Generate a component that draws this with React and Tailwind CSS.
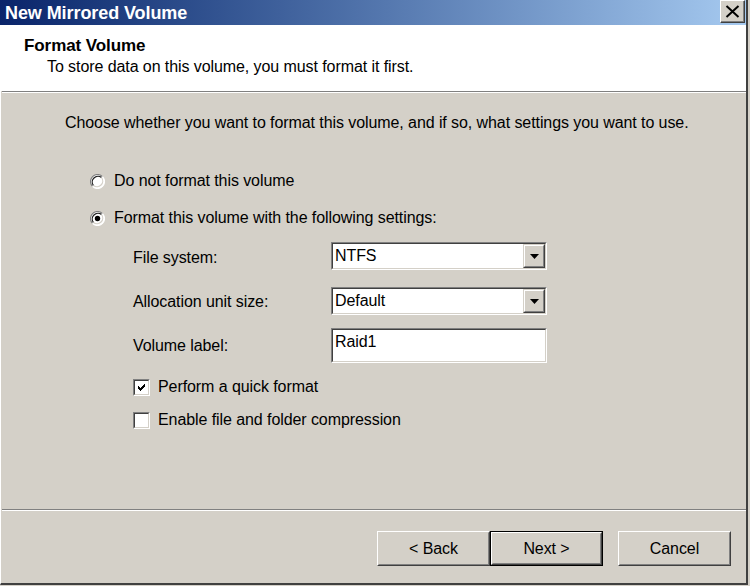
import React from "react";

function Radio({ checked }) {
  return (
    <svg width="15" height="15" viewBox="0 0 15 15" className="shrink-0">
      <circle cx="7.5" cy="7.5" r="7" fill="#ffffff" />
      <path d="M12.45 2.55 A7 7 0 0 0 2.55 12.45" fill="none" stroke="#808080" strokeWidth="1.2" />
      <path d="M2.55 12.45 A7 7 0 0 0 12.45 2.55" fill="none" stroke="#ffffff" strokeWidth="1.2" />
      <path d="M11.5 3.5 A5.7 5.7 0 0 0 3.5 11.5" fill="none" stroke="#202020" strokeWidth="1.2" />
      <path d="M3.5 11.5 A5.7 5.7 0 0 0 11.5 3.5" fill="none" stroke="#d4d0c8" strokeWidth="1.2" />
      {checked && <circle cx="7.5" cy="7.5" r="2.7" fill="#000000" />}
    </svg>
  );
}

function Checkbox({ checked }) {
  return (
    <div className="w-[17px] h-[17px] shrink-0 border-t border-l border-[#808080] border-r border-b border-r-white border-b-white">
      <div className="w-full h-full border-t border-l border-[#404040] border-r border-b border-r-[#d4d0c8] border-b-[#d4d0c8] bg-white flex items-center justify-center">
        {checked && (
          <svg width="9" height="9" viewBox="0 0 9 9" shapeRendering="crispEdges">
            <path d="M1 3 L3 5 L8 0 L8 3 L3 8 L1 6 Z" fill="#000" />
          </svg>
        )}
      </div>
    </div>
  );
}

function Sunken({ className, children }) {
  return (
    <div className={"border-t border-l border-[#808080] border-r border-b border-r-white border-b-white " + className}>
      <div className="w-full h-full border-t border-l border-[#404040] border-r border-b border-r-[#d4d0c8] border-b-[#d4d0c8] bg-white flex">
        {children}
      </div>
    </div>
  );
}

function Select({ value }) {
  return (
    <Sunken className="w-[216px] h-[28px]">
      <div className="flex-1 flex items-center pl-[2px] text-[16px] leading-none text-black">{value}</div>
      <div className="w-[22px] h-full border-t border-l border-[#d4d0c8] border-r border-b border-r-[#404040] border-b-[#404040]">
        <div className="w-full h-full bg-[#d4d0c8] border-t border-l border-white border-r border-b border-r-[#808080] border-b-[#808080] flex items-center justify-center">
          <svg width="9" height="5" viewBox="0 0 9 5">
            <path d="M0 0 H9 L4.5 5 Z" fill="#000" />
          </svg>
        </div>
      </div>
    </Sunken>
  );
}

function Button({ children, isDefault }) {
  const inner = (
    <div className="w-full h-full border-t border-l border-white border-r border-b border-r-[#404040] border-b-[#404040]">
      <div className="w-full h-full border-t border-l border-[#d4d0c8] border-r border-b border-r-[#808080] border-b-[#808080] flex items-center justify-center text-[16px] text-black">
        {children}
      </div>
    </div>
  );
  if (isDefault) {
    return <div className="w-[113px] h-[35px] border border-black">{inner}</div>;
  }
  return <div className="w-[113px] h-[35px]">{inner}</div>;
}

export default function App() {
  return (
    <div
      className="w-[750px] h-[586px] bg-[#d4d0c8] overflow-hidden tracking-[-0.08px]"
      style={{ fontFamily: '"Liberation Sans", Arial, sans-serif' }}
    >
      <div className="w-[748px] h-[585px] flex flex-col border-l border-white border-r-2 border-r-[#404040] border-b-2 border-b-[#404040]">
        {/* Title bar */}
        <div className="h-[25px] shrink-0 flex items-center justify-between bg-gradient-to-r from-[#0a246a] to-[#a6caf0] -ml-px">
          <div className="pl-[5px] text-white font-bold text-[18px] leading-none">New Mirrored Volume</div>
          <div className="self-start w-[25px] h-[23px] mr-[1px] border-t border-l border-white border-r border-b border-r-[#404040] border-b-[#404040]">
            <div className="w-full h-full bg-[#d4d0c8] border-r border-b border-[#808080] flex items-center justify-center">
              <svg width="15" height="13" viewBox="0 0 15 13">
                <path d="M1.5 1 L13.5 12 M13.5 1 L1.5 12" stroke="#000" strokeWidth="2" />
              </svg>
            </div>
          </div>
        </div>

        {/* Header */}
        <div className="h-[66px] shrink-0 bg-white pl-[23px] pt-[11px] text-black">
          <div className="font-bold text-[17px] leading-[20px]">Format Volume</div>
          <div className="pl-[23px] mt-[2px] text-[16px] leading-[18px]">
            To store data on this volume, you must format it first.
          </div>
        </div>
        <div className="shrink-0 ml-[1px] border-t border-[#808080] border-b border-b-white" />

        {/* Body */}
        <div className="h-[416px] shrink-0 pl-[64px] pt-[21px] text-[16px] leading-[18px] text-black">
          <div>Choose whether you want to format this volume, and if so, what settings you want to use.</div>

          <div className="mt-[40px] ml-[25px] flex items-center gap-[9px]">
            <Radio checked={false} />
            <span>Do not format this volume</span>
          </div>
          <div className="mt-[19px] ml-[25px] flex items-center gap-[9px]">
            <Radio checked={true} />
            <span>Format this volume with the following settings:</span>
          </div>

          <div className="ml-[68px] mt-[15px] flex flex-col">
            <div className="flex items-center">
              <div className="w-[198px] pt-[3px]">File system:</div>
              <Select value="NTFS" />
            </div>
            <div className="flex items-center mt-[17px]">
              <div className="w-[198px] pt-[2px]">Allocation unit size:</div>
              <Select value="Default" />
            </div>
            <div className="flex items-center mt-[13px]">
              <div className="w-[198px]">Volume label:</div>
              <Sunken className="w-[216px] h-[35px]">
                <div className="pl-[2px] pt-[3px] text-[16px] leading-[18px]">Raid1</div>
              </Sunken>
            </div>
            <div className="flex items-center gap-[8px] mt-[15px]">
              <Checkbox checked={true} />
              <span>Perform a quick format</span>
            </div>
            <div className="flex items-center gap-[8px] mt-[15px]">
              <Checkbox checked={false} />
              <span>Enable file and folder compression</span>
            </div>
          </div>
        </div>

        <div className="shrink-0 ml-[1px] border-t border-[#808080] border-b border-b-white" />

        {/* Footer */}
        <div className="flex-1 flex justify-end items-start pt-[20px] pr-[15px]">
          <Button>&lt; Back</Button>
          <Button isDefault>Next &gt;</Button>
          <div className="w-[15px]" />
          <Button>Cancel</Button>
        </div>
      </div>
    </div>
  );
}
